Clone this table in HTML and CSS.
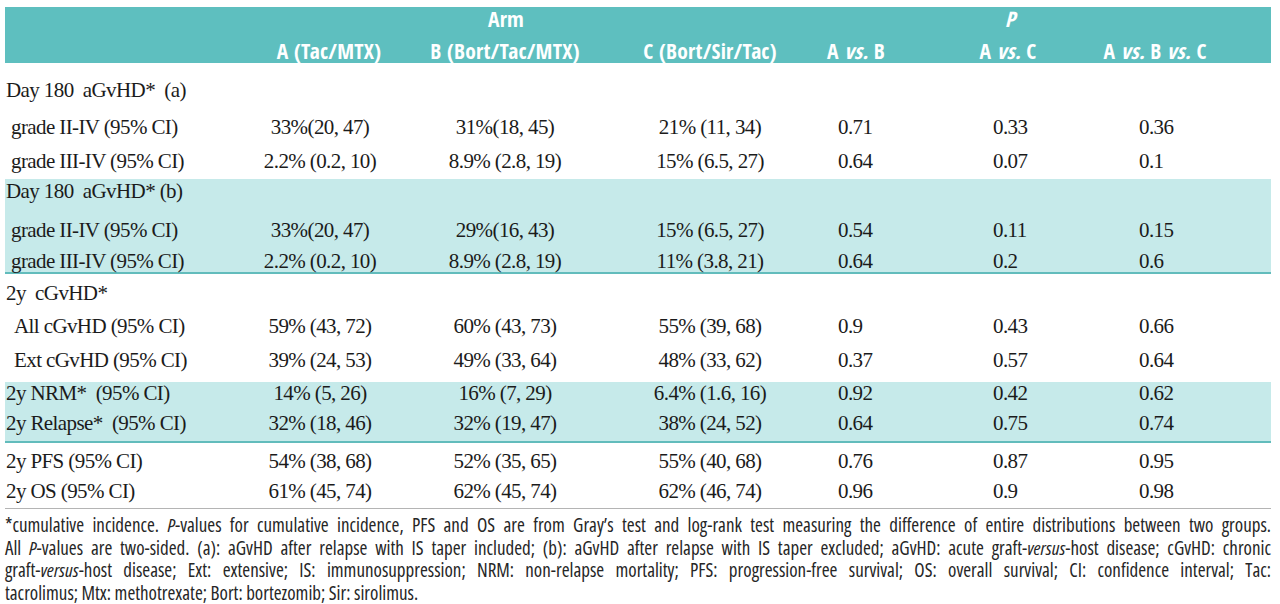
FILE: index.html
```html
<!DOCTYPE html>
<html>
<head>
<meta charset="utf-8">
<link rel="stylesheet" href="styles.css">
</head>
<body>
<div class="sheet">
  <div class="head">
    <div class="head-top">
      <span></span>
      <span class="arm">Arm</span>
      <span class="pgroup">P</span>
    </div>
    <div class="head-cols">
      <span></span>
      <span class="hc hc-a">A (Tac/MTX)</span>
      <span class="hc">B (Bort/Tac/MTX)</span>
      <span class="hc">C (Bort/Sir/Tac)</span>
      <span class="hc">A <i>vs.</i> B</span>
      <span class="hc hc-ac">A <i>vs.</i> C</span>
      <span class="hc hc-abc">A <i>vs.</i> B <i>vs.</i> C</span>
    </div>
  </div>

  <div class="group">
    <div class="row r1"><span class="lbl">Day 180&nbsp; aGvHD*&nbsp; (a)</span></div>
    <div class="row r2"><span class="lbl sub">grade II-IV (95% CI)</span><span class="v">33%(20, 47)</span><span class="v">31%(18, 45)</span><span class="v">21% (11, 34)</span><span class="p p1">0.71</span><span class="p p2">0.33</span><span class="p p3">0.36</span></div>
    <div class="row r3"><span class="lbl sub">grade III-IV (95% CI)</span><span class="v">2.2% (0.2, 10)</span><span class="v">8.9% (2.8, 19)</span><span class="v">15% (6.5, 27)</span><span class="p p1">0.64</span><span class="p p2">0.07</span><span class="p p3">0.1</span></div>
  </div>

  <div class="group band">
    <div class="row r4"><span class="lbl">Day 180&nbsp; aGvHD* (b)</span></div>
    <div class="row r5"><span class="lbl sub">grade II-IV (95% CI)</span><span class="v">33%(20, 47)</span><span class="v">29%(16, 43)</span><span class="v">15% (6.5, 27)</span><span class="p p1">0.54</span><span class="p p2">0.11</span><span class="p p3">0.15</span></div>
    <div class="row r6"><span class="lbl sub">grade III-IV (95% CI)</span><span class="v">2.2% (0.2, 10)</span><span class="v">8.9% (2.8, 19)</span><span class="v">11% (3.8, 21)</span><span class="p p1">0.64</span><span class="p p2">0.2</span><span class="p p3">0.6</span></div>
  </div>

  <div class="group">
    <div class="row r7"><span class="lbl">2y&nbsp; cGvHD*</span></div>
    <div class="row r8"><span class="lbl sub2">All cGvHD (95% CI)</span><span class="v">59% (43, 72)</span><span class="v">60% (43, 73)</span><span class="v">55% (39, 68)</span><span class="p p1">0.9</span><span class="p p2">0.43</span><span class="p p3">0.66</span></div>
    <div class="row r9"><span class="lbl sub2">Ext cGvHD (95% CI)</span><span class="v">39% (24, 53)</span><span class="v">49% (33, 64)</span><span class="v">48% (33, 62)</span><span class="p p1">0.37</span><span class="p p2">0.57</span><span class="p p3">0.64</span></div>
  </div>

  <div class="group band">
    <div class="row r10"><span class="lbl">2y NRM*&nbsp; (95% CI)</span><span class="v">14% (5, 26)</span><span class="v">16% (7, 29)</span><span class="v">6.4% (1.6, 16)</span><span class="p p1">0.92</span><span class="p p2">0.42</span><span class="p p3">0.62</span></div>
    <div class="row r11"><span class="lbl">2y Relapse*&nbsp; (95% CI)</span><span class="v">32% (18, 46)</span><span class="v">32% (19, 47)</span><span class="v">38% (24, 52)</span><span class="p p1">0.64</span><span class="p p2">0.75</span><span class="p p3">0.74</span></div>
  </div>

  <div class="group closing">
    <div class="row r12"><span class="lbl">2y PFS (95% CI)</span><span class="v">54% (38, 68)</span><span class="v">52% (35, 65)</span><span class="v">55% (40, 68)</span><span class="p p1">0.76</span><span class="p p2">0.87</span><span class="p p3">0.95</span></div>
    <div class="row r13"><span class="lbl">2y OS (95% CI)</span><span class="v">61% (45, 74)</span><span class="v">62% (45, 74)</span><span class="v">62% (46, 74)</span><span class="p p1">0.96</span><span class="p p2">0.9</span><span class="p p3">0.98</span></div>
  </div>

  <div class="notes">
    <span class="ln tight">*cumulative incidence. <i>P</i>-values for cumulative incidence, PFS and OS are from Gray’s test and log-rank test measuring the difference of entire distributions between two groups.</span>
    <span class="ln tight">All <i>P</i>-values are two-sided. (a): aGvHD after relapse with IS taper included; (b): aGvHD after relapse with IS taper excluded; aGvHD: acute graft-<i>versus</i>-host disease; cGvHD: chronic</span>
    <span class="ln">graft-<i>versus</i>-host disease; Ext: extensive; IS: immunosuppression; NRM: non-relapse mortality; PFS: progression-free survival; OS: overall survival; CI: confidence interval; Tac:</span>
    <span class="ln last">tacrolimus; Mtx: methotrexate; Bort: bortezomib; Sir: sirolimus.</span>
  </div>
</div>
</body>
</html>
```

FILE: styles.css
```css
html, body {
  margin: 0;
  padding: 0;
  background: #ffffff;
}

body {
  font-family: "Liberation Serif", "Times New Roman", serif;
  color: #1b1b1b;
}

.sheet {
  width: 1266px;
  margin-left: 5px;
  padding-top: 7px;
}

/* ---------- header ---------- */
.head {
  background: #5ebfbf;
  color: #ffffff;
  font-family: "Open Sans Condensed", "Open Sans", "Noto Sans", sans-serif;
  font-stretch: 75%;
  font-weight: bold;
  font-size: 21.5px;
  line-height: 22px;
  letter-spacing: 0.2px;
  height: 56px;
}

.head-top {
  display: grid;
  grid-template-columns: 225px 590px 451px;
  height: 28px;
  padding-top: 1px;
  box-sizing: border-box;
}

.arm {
  text-align: center;
  padding-right: 38px;
}

.pgroup {
  text-align: center;
  padding-right: 71px;
  font-style: italic;
}

.head-cols {
  display: grid;
  grid-template-columns: 225px 180px 190px 220px 72px 188px 191px;
  height: 28px;
  padding-top: 5px;
  box-sizing: border-box;
  white-space: nowrap;
}

.hc {
  text-align: center;
}

.hc-a {
  padding-left: 18px;
}

.hc-ac {
  padding-left: 44px;
}

.hc-abc {
  padding-right: 41px;
}

/* ---------- body rows ---------- */
.group.band {
  background: #c6eaea;
  border-bottom: 2px solid #62bcbc;
}

.group.closing {
  border-bottom: 1px solid #b4b4b4;
}

.row {
  display: grid;
  grid-template-columns: 225px 180px 190px 220px 72px 188px 191px;
  font-size: 21px;
  line-height: 20px;
  letter-spacing: -0.6px;
  box-sizing: border-box;
  white-space: nowrap;
}

.lbl {
  padding-left: 1px;
}

.lbl.sub {
  padding-left: 6px;
}

.lbl.sub2 {
  padding-left: 9px;
}

.v {
  text-align: center;
}

.p {
  text-align: left;
}

.p1 { padding-left: 18px; }
.p2 { padding-left: 101px; }
.p3 { padding-left: 59px; }

.r1  { height: 49px; padding-top: 17px; }
.r2  { height: 33px; padding-top: 5px; }
.r3  { height: 34px; padding-top: 6px; }
.r4  { height: 33px; padding-top: 2px; }
.r5  { height: 32px; padding-top: 8px; }
.r6  { height: 28px; padding-top: 7px; }
.r7  { height: 38px; padding-top: 9px; }
.r8  { height: 33px; padding-top: 4px; }
.r9  { height: 37px; padding-top: 5px; }
.r10 { height: 30px; padding-top: 1px; }
.r11 { height: 29px; padding-top: 1px; }
.r12 { height: 33px; padding-top: 8px; }
.r13 { height: 32px; padding-top: 5px; }

/* ---------- notes ---------- */
.notes {
  margin-top: 5px;
  font-family: "Open Sans", "Noto Sans", sans-serif;
  font-stretch: 75%;
  font-weight: 400;
  font-size: 19px;
  line-height: 22.7px;
  color: #262626;
}

.notes .ln {
  display: block;
  text-align: justify;
  text-align-last: justify;
}

.notes .ln.tight {
  word-spacing: -1.5px;
}

.notes .ln.last {
  text-align-last: left;
}
```
